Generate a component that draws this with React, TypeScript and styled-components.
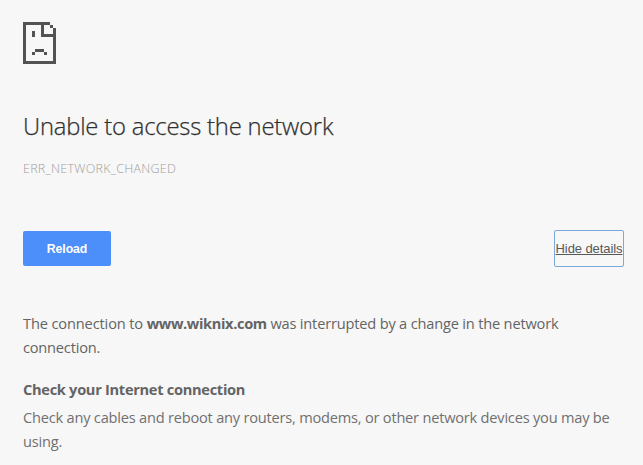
import React from "react";
import styled, { createGlobalStyle } from "styled-components";

const GlobalStyle = createGlobalStyle`
  html, body { margin: 0; background: #f7f7f7; }
  body { overflow: hidden; }
`;

const Page = styled.main`
  box-sizing: border-box;
  width: 643px;
  height: 465px;
  padding: 22px 19px 0 23px;
  overflow: hidden;
  background: #f7f7f7;
  color: #646464;
  font-family: "Open Sans", "Noto Sans", sans-serif;
  font-size: 14.6px;
  line-height: 24px;
`;

const SadPage = styled.svg`
  display: block;
  width: 33px;
  height: 42px;
  fill: #535353;
`;

const Title = styled.h1`
  margin: 46px 0 0;
  color: #303030;
  font-size: 23.8px;
  font-weight: 300;
  letter-spacing: -0.19px;
  -webkit-text-stroke: 0.25px #303030;
  line-height: 32px;
  white-space: nowrap;
`;

const ErrorCode = styled.div`
  margin-top: 17px;
  color: #a0a0a0;
  font-size: 12.5px;
  font-weight: 300;
  letter-spacing: 0.27px;
  line-height: 20px;
`;

const Actions = styled.div`
  display: flex;
  justify-content: space-between;
  margin-top: 52px;
  height: 35px;
`;

const Button = styled.button`
  box-sizing: border-box;
  height: 35px;
  padding: 0;
  border: 0;
  border-radius: 2px;
  font: 13px/35px "Liberation Sans", Arial, sans-serif;
`;

const ReloadButton = styled(Button)`
  width: 88px;
  padding-top: 1px;
  background: #4c8efa;
  color: #fff;
  font-weight: 700;
  font-size: 12.3px;
  letter-spacing: -0.1px;
  line-height: 34px;
`;

const DetailsButton = styled(Button)`
  width: 70px;
  height: 37px;
  margin-top: -1px;
  padding-top: 1px;
  border: 1px solid #7ba9dc;
  background: transparent;
  color: #585858;
  line-height: 34px;
  letter-spacing: -0.08px;
  text-decoration: underline;
  white-space: nowrap;
`;

const Details = styled.section`
  margin-top: 45px;
`;

const Line = styled.span<{ $spacing: number; $bold?: boolean }>`
  letter-spacing: ${(p) => p.$spacing}px;
  font-weight: ${(p) => (p.$bold ? 700 : 400)};
  white-space: nowrap;
`;

const Paragraph = styled.p`
  margin: 0;
`;

const Suggestion = styled.div`
  margin-top: 18px;
`;

const Advice = styled(Paragraph)`
  margin-top: 4px;
  color: #707070;
`;

export default function App() {
  return (
    <>
      <GlobalStyle />
      <Page>
        <SadPage viewBox="0 0 11 14" shapeRendering="crispEdges" aria-hidden="true">
          <path d="M0 0H9V1H10V2H11V14H0ZM1 1V13H10V5H6V1ZM7 1V4H10V2H9V1Z" fillRule="evenodd" />
          <path d="M3 3H4V5H3ZM4 9H7V10H4ZM3 10H4V11H3ZM7 10H8V11H7Z" />
        </SadPage>
        <Title>Unable to access the network</Title>
        <ErrorCode>ERR_NETWORK_CHANGED</ErrorCode>
        <Actions>
          <ReloadButton>Reload</ReloadButton>
          <DetailsButton>Hide details</DetailsButton>
        </Actions>
        <Details>
          <Paragraph>
            <Line $spacing={-0.13}>The connection to </Line>
            <Line $spacing={-0.36} $bold>www.wiknix.com</Line>
            <Line $spacing={-0.18}> was interrupted by a change in the network</Line>
            <br />
            <Line $spacing={-0.2}>connection.</Line>
          </Paragraph>
          <Suggestion>
            <Line $spacing={-0.29} $bold>Check your Internet connection</Line>
            <Advice>
              <Line $spacing={-0.21}>Check any cables and reboot any routers, modems, or other network devices you may be</Line>
              <br />
              <Line $spacing={-0.2}>using.</Line>
            </Advice>
          </Suggestion>
        </Details>
      </Page>
    </>
  );
}
